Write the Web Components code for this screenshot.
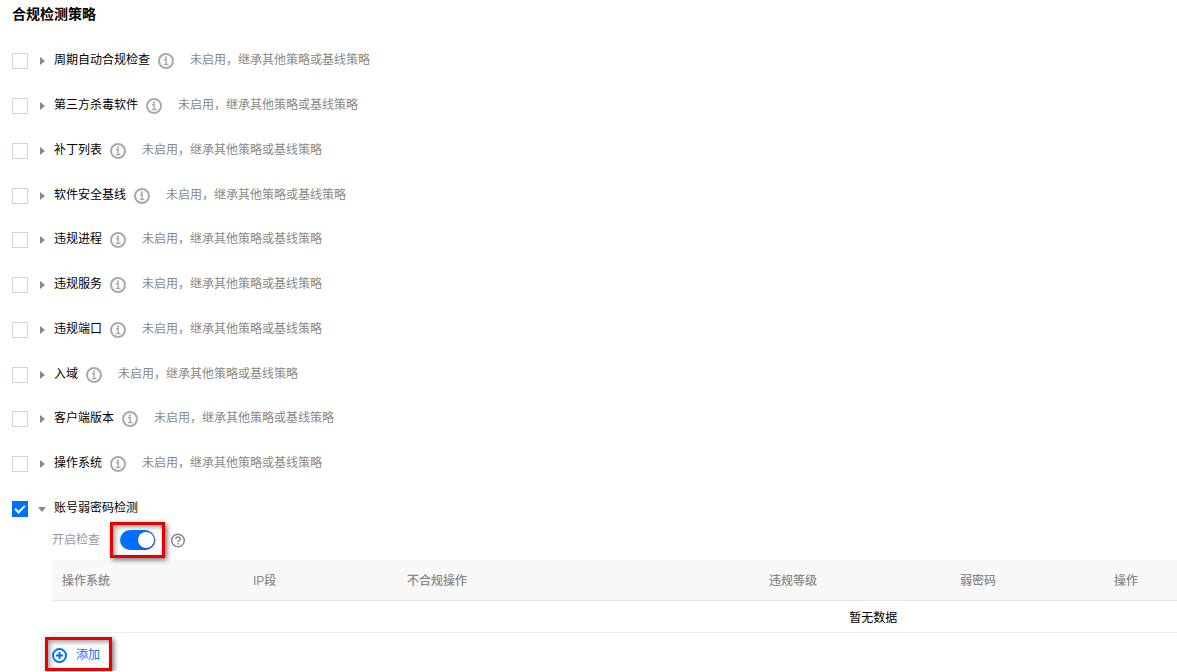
<!DOCTYPE html>
<html lang="zh-CN">
<head>
<meta charset="utf-8">
<title>合规检测策略</title>
<style>
  body {
    margin: 0;
    background: #fff;
    color: #000;
    font-family: "Liberation Sans", "Noto Sans CJK SC", sans-serif;
    font-size: 12px;
    line-height: 16px;
  }

  /* a policy body lines up with the policy name */
  [slot="body"] {
    padding: 5px 0 0 40px;
  }

  .action {
    display: flex;
    align-items: center;
    gap: 9px;
    height: 28px;
    padding: 2px 0 0;
    border: 0;
    background: none;
    color: #006eff;
    font: inherit;
    cursor: pointer;
  }

  .switch-line {
    display: flex;
    align-items: center;
    gap: 10px;
    margin-bottom: 2px;
    color: #999;
  }

  .switch-line callout-frame {
    --pad: 5px 7px;
    margin-right: -5px;
  }

  .footer {
    display: flex;
    margin: 4px 0 0 -7px;
  }

  .footer callout-frame {
    --pad: 0 9px 0 4px;
  }
</style>
</head>
<body>

<policy-panel heading="合规检测策略">
  <policy-row name="周期自动合规检查" info>未启用，继承其他策略或基线策略</policy-row>
  <policy-row name="第三方杀毒软件" info>未启用，继承其他策略或基线策略</policy-row>
  <policy-row name="补丁列表" info>未启用，继承其他策略或基线策略</policy-row>
  <policy-row name="软件安全基线" info>未启用，继承其他策略或基线策略</policy-row>
  <policy-row name="违规进程" info>未启用，继承其他策略或基线策略</policy-row>
  <policy-row name="违规服务" info>未启用，继承其他策略或基线策略</policy-row>
  <policy-row name="违规端口" info>未启用，继承其他策略或基线策略</policy-row>
  <policy-row name="入域" info>未启用，继承其他策略或基线策略</policy-row>
  <policy-row name="客户端版本" info>未启用，继承其他策略或基线策略</policy-row>
  <policy-row name="操作系统" info>未启用，继承其他策略或基线策略</policy-row>
  <policy-row name="账号弱密码检测" open>
    <div slot="body">
      <div class="switch-line">
        <span>开启检查</span>
        <callout-frame><toggle-switch label="开启检查" checked></toggle-switch></callout-frame>
        <policy-icon name="help"></policy-icon>
      </div>
      <policy-table columns="操作系统,IP段,不合规操作,违规等级,弱密码,操作" empty="暂无数据"></policy-table>
      <div class="footer">
        <callout-frame>
          <button class="action" type="button"><policy-icon name="add"></policy-icon>添加</button>
        </callout-frame>
      </div>
    </div>
  </policy-row>
</policy-panel>

<script>
const icons = {
  info: `<svg width="16" height="16" viewBox="0 0 16 16" fill="none" stroke="#aaa">
      <circle cx="8" cy="8" r="7" stroke-width="2"/>
      <path d="M6 6.8h2.2v4.5M5.8 11.5h4.6" stroke-width="1.4"/>
      <path d="M7 4.5h2" stroke-width="2"/>
    </svg>`,
  help: `<svg width="16" height="16" viewBox="0 0 16 16" fill="none" stroke="#888">
      <circle cx="8" cy="8.5" r="6.3" stroke-width="1.5"/>
      <path d="M5.8 7.2C5.8 5.8 6.7 5.1 8 5.1s2.2.8 2.2 1.9c0 1.5-2.1 1.5-2.1 3" stroke-width="1.5"/>
      <path d="M7.3 11.7h1.6" stroke-width="1.5"/>
    </svg>`,
  add: `<svg width="15" height="15" viewBox="0 0 15 15" fill="none" stroke="#006eff" stroke-width="2">
      <circle cx="7.5" cy="7.5" r="6.5"/>
      <path d="M7.5 4v7M4 7.5h7"/>
    </svg>`,
};

/**
 * Attach an open shadow root filled with the given markup.
 * @param {HTMLElement} host
 * @param {string} html
 * @return {ShadowRoot}
 */
function render(host, html) {
  const template = document.createElement('template');
  template.innerHTML = html;
  const root = host.attachShadow({mode: 'open'});
  root.appendChild(template.content.cloneNode(true));
  return root;
}

/**
 * Small line icon, picked by name.
 */
class PolicyIcon extends HTMLElement {
  constructor() {
    super();
    render(this, `
      <style>
        :host { display: block; flex: none; }
        svg { display: block; }
      </style>
      ${icons[this.getAttribute('name')]}
    `);
  }
}

/**
 * Red frame drawn round a control to point it out.
 */
class CalloutFrame extends HTMLElement {
  constructor() {
    super();
    render(this, `
      <style>
        :host {
          display: block;
          position: relative;
          flex: none;
          padding: var(--pad, 4px);
          border: 3px solid #e60000;
          box-shadow: 2px 2px 5px rgba(0, 0, 0, .55), inset 2px 2px 5px rgba(0, 0, 0, .4);
        }
      </style>
      <slot></slot>
    `);
  }
}

/**
 * On/off switch on top of a real checkbox.
 */
class ToggleSwitch extends HTMLElement {
  constructor() {
    super();
    const root = render(this, `
      <style>
        :host { display: block; }
        input {
          display: flex;
          align-items: center;
          justify-content: flex-start;
          box-sizing: border-box;
          width: 35px;
          height: 20px;
          margin: 0;
          padding: 0 1px;
          border-radius: 10px;
          background: #bbb;
          appearance: none;
          cursor: pointer;
        }
        input::before {
          content: "";
          width: 16px;
          height: 16px;
          border-radius: 50%;
          background: #fff;
          box-shadow: 1px 1px 3px rgba(0, 0, 0, .4);
        }
        input:checked { justify-content: flex-end; background: #006eff; }
      </style>
      <input type="checkbox" role="switch">
    `);
    const input = root.querySelector('input');
    input.checked = this.hasAttribute('checked');
    input.setAttribute('aria-label', this.getAttribute('label'));
  }
}

/**
 * Table with a header line and an empty state.
 */
class PolicyTable extends HTMLElement {
  constructor() {
    super();
    const columns = this.getAttribute('columns').split(',');
    const widths = [191, 154, 362, 191, 154];
    render(this, `
      <style>
        /* the table is wider than the panel and runs out on the right */
        :host { display: block; overflow: hidden; }
        table {
          width: 146%;
          border-collapse: separate;
          border-spacing: 0;
          table-layout: fixed;
        }
        th {
          height: 38px;
          padding: 2px 10px 0;
          border-bottom: 1px solid #e5e5ee;
          background: #f8f8f8;
          color: #888;
          font-weight: 500;
          text-align: left;
        }
        td {
          height: 29px;
          padding: 2px 0 0;
          border-bottom: 1px solid #eee;
          text-align: center;
        }
      </style>
      <table>
        <colgroup>${columns.map((c, i) => widths[i] ? `<col style="width:${widths[i]}px">` : '<col>').join('')}</colgroup>
        <thead><tr>${columns.map((c) => `<th scope="col">${c}</th>`).join('')}</tr></thead>
        <tbody><tr><td colspan="${columns.length}">${this.getAttribute('empty')}</td></tr></tbody>
      </table>
    `);
  }
}

/**
 * One policy: checkbox, expander, name, status text and optional body.
 */
class PolicyRow extends HTMLElement {
  constructor() {
    super();
    const open = this.hasAttribute('open');
    const name = this.getAttribute('name');
    const root = render(this, `
      <style>
        :host { display: block; padding-bottom: 29px; }
        .line { display: flex; align-items: center; height: 16px; }
        input {
          display: grid;
          place-items: center;
          box-sizing: border-box;
          width: 16px;
          height: 16px;
          margin: 0 10px 0 0;
          border: 1px solid #cfd5de;
          background: #fff;
          appearance: none;
        }
        input:checked { border-color: #006eff; background: #006eff; }
        input:checked::before {
          content: "";
          width: 8px;
          height: 4px;
          margin-bottom: 3px;
          border: solid #fff;
          border-width: 0 0 2px 2px;
          box-sizing: content-box;
          transform: rotate(-45deg);
        }
        button {
          display: grid;
          place-items: center;
          width: 8px;
          height: 16px;
          margin-right: 8px;
          padding: 0;
          border: 0;
          background: none;
        }
        label, .status { padding-bottom: 2px; white-space: nowrap; }
        policy-icon { margin: 0 16px 0 8px; }
        .status { color: #888; }
      </style>
      <div class="line">
        <input type="checkbox" id="check">
        <button type="button" aria-label="展开${name}" aria-expanded="${open}">
          <svg width="8" height="8" viewBox="0 0 8 8" fill="#888">
            <path d="${open ? 'M0 2h8L4 7z' : 'M2 0l5 4-5 4z'}"/>
          </svg>
        </button>
        <label for="check">${name}</label>
        ${this.hasAttribute('info') ? '<policy-icon name="info"></policy-icon>' : ''}
        <span class="status"><slot></slot></span>
      </div>
      <slot name="body"></slot>
    `);
    root.querySelector('input').checked = open;
  }
}

/**
 * Heading and list of policy rows.
 */
class PolicyPanel extends HTMLElement {
  constructor() {
    super();
    render(this, `
      <style>
        :host { display: block; padding: 3px 0 0 12px; }
        h1 { margin: 0 0 28px; font-size: 14px; line-height: 22px; font-weight: 700; }
        ::slotted(policy-row:nth-child(4n)) { padding-bottom: 28px; }
        ::slotted(policy-row:last-child) { padding-bottom: 0; }
      </style>
      <h1>${this.getAttribute('heading')}</h1>
      <slot></slot>
    `);
  }
}

customElements.define('policy-icon', PolicyIcon);
customElements.define('callout-frame', CalloutFrame);
customElements.define('toggle-switch', ToggleSwitch);
customElements.define('policy-table', PolicyTable);
customElements.define('policy-row', PolicyRow);
customElements.define('policy-panel', PolicyPanel);
</script>
</body>
</html>
